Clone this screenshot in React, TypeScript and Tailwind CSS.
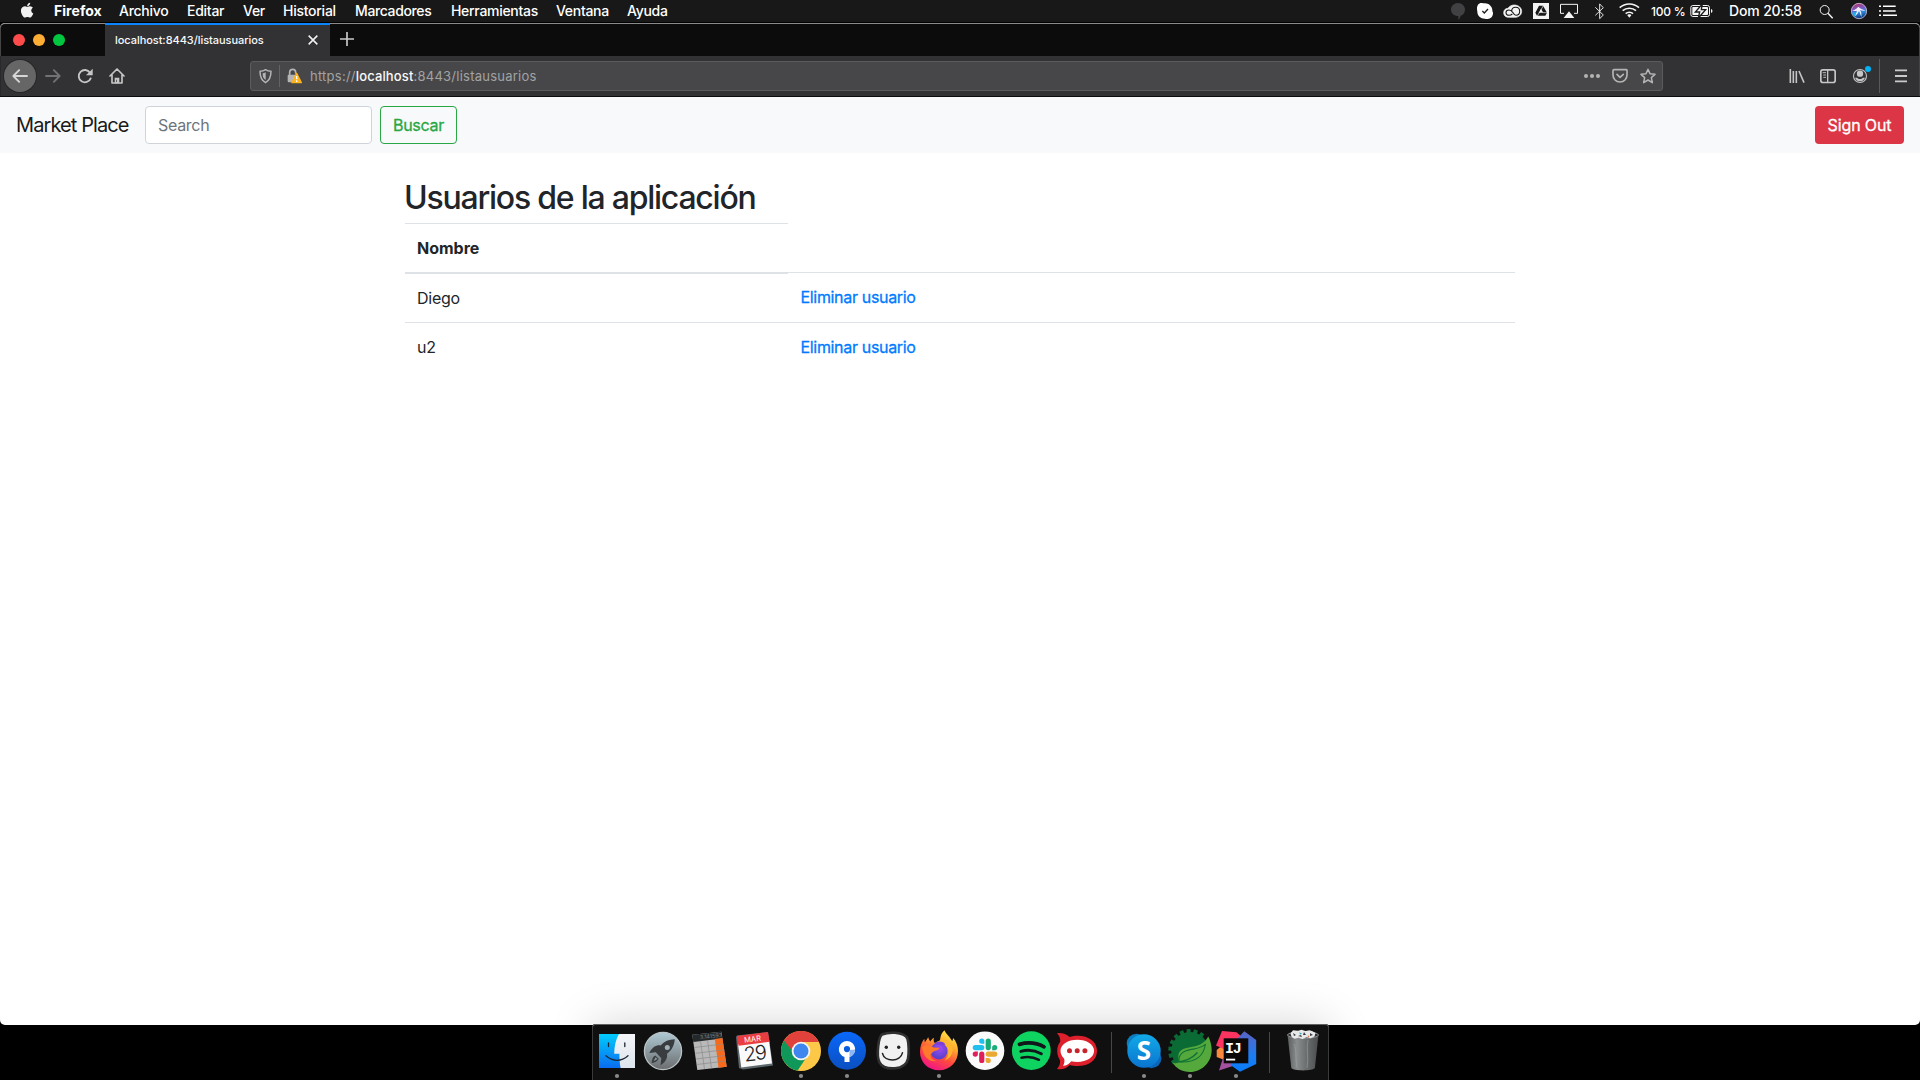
import type { ReactNode } from "react";

type GlyphProps = { w: number; h: number; children: ReactNode; className?: string };

/* Small bar icons are drawn on a grid three times finer than their box. */
function Glyph({ w, h, children, className = "" }: GlyphProps) {
  return (
    <svg width={w} height={h} viewBox={`0 0 ${w * 3} ${h * 3}`} className={`block shrink-0 ${className}`} fill="none">
      {children}
    </svg>
  );
}

const menus = [
  { label: "Firefox", cls: "w-[65px] font-bold tracking-[0.05px]" },
  { label: "Archivo", cls: "w-[68px]" },
  { label: "Editar", cls: "w-[56px]" },
  { label: "Ver", cls: "w-[40px]" },
  { label: "Historial", cls: "w-[72px]" },
  { label: "Marcadores", cls: "w-[96px] tracking-[-0.37px]" },
  { label: "Herramientas", cls: "w-[105px] tracking-[-0.3px]" },
  { label: "Ventana", cls: "w-[71px] tracking-[-0.3px]" },
  { label: "Ayuda", cls: "w-[50px] tracking-[-0.3px]" },
];

function MenuBar() {
  return (
    <div className="flex h-[22px] items-center bg-[#181818] text-sm font-medium leading-[22px] tracking-[-0.26px] text-white">
      <Glyph w={14} h={22} className="ml-[20px] mr-[20px]">
        <g transform="translate(-8 1) scale(2.450)">
          <path
            fill="#f2f2f2"
            d="M17.05 20.28c-.98.95-2.05.8-3.08.35-1.09-.46-2.09-.48-3.24 0-1.44.62-2.2.44-3.06-.35C2.79 15.25 3.51 7.59 9.05 7.31c1.35.07 2.29.74 3.08.8 1.18-.24 2.31-.93 3.57-.84 1.51.12 2.65.72 3.4 1.8-3.12 1.87-2.38 5.98.48 7.13-.57 1.5-1.31 2.99-2.54 4.09zM12.03 7.25c-.15-2.23 1.66-4.07 3.74-4.25.29 2.58-2.34 4.5-3.74 4.25z"
          />
        </g>
      </Glyph>
      {menus.map((m) => (
        <span key={m.label} className={m.cls}>
          {m.label}
        </span>
      ))}
      <div className="ml-auto flex h-[22px] items-center">
        <Glyph w={14} h={22}>
          <path fill="#414144" d="M21 9c12 0 21 9 21 20 0 10-6 16-13 18-1 5-3 9-7 12v-11C9 48 0 40 0 29S9 9 21 9z" />
        </Glyph>
        <Glyph w={16} h={22} className="ml-3">
          <path fill="#fff" d="M13 9c4 0 6 1 9 1 12-1 23 8 24 20 0 4 1 5 2 8 1 12-8 20-17 19-3 0-5-1-8-1C11 56 1 47 1 35c0-3-1-5-1-9C0 16 5 9 13 9z" />
          <path d="M16 33l6 6 11-12" stroke="#222" strokeWidth="4" />
        </Glyph>
        <Glyph w={20} h={22} className="ml-[10px]">
          <path d="M17 52C8 52 2 46 2 38s6-13 13-13c4-6 10-10 18-10 13 0 23 8 23 19s-9 18-20 18z" fill="#f4f4f4" stroke="#f4f4f4" strokeWidth="2" />
          <path d="M28 42c-3 3-6 4-10 4-6 0-9-4-9-8s4-8 9-8c6 0 9 4 12 8 3 5 5 8 9 8 6 0 11-5 11-12s-5-12-12-12-12 5-12 12" stroke="#181818" strokeWidth="3.2" />
        </Glyph>
        <Glyph w={16} h={22} className="ml-[10px]">
          <rect y="9" width="48" height="48" fill="#f4f4f4" />
          <path d="M18 17h12l12 21-5 9H12l-5-9zM24 26l-7 12h14z" fill="#181818" fillRule="evenodd" />
          <path d="M31 17L22 33M13 48l7-12M43 38H29" stroke="#f4f4f4" strokeWidth="2" />
        </Glyph>
        <Glyph w={18} h={22} className="ml-[11px]">
          <path d="M12 40H1.5V13h51v27H42" stroke="#f4f4f4" strokeWidth="3" />
          <path d="M27 34l16 20H11z" fill="#f4f4f4" />
        </Glyph>
        <Glyph w={11} h={22} className="ml-4">
          <path d="M4 22l24 23-11 11V12l11 11L4 46" stroke="#f4f4f4" strokeWidth="2.800" />
        </Glyph>
        <Glyph w={21} h={22} className="ml-[14px]">
          <g stroke="#f4f4f4" strokeWidth="4.600">
            <path d="M2 23c16-15 42-15 58 0" />
            <path d="M11 32c11-10 29-10 40 0" />
            <path d="M20 41c6-6 16-6 22 0" />
          </g>
          <path d="M31 43c4 0 6 2 6 3l-6 7-6-7c0-1 2-3 6-3z" fill="#f4f4f4" />
        </Glyph>
        <span className="ml-[11px] w-[39px] text-xs leading-[21px] tracking-[-0.25px]">100 %</span>
        <Glyph w={24} h={22}>
          <rect x="2.500" y="16.500" width="56" height="33" rx="6" stroke="#f4f4f4" strokeWidth="3" />
          <path d="M63 27c6 2 6 10 0 12z" fill="#f4f4f4" />
          <rect x="7" y="21" width="47" height="24" rx="2" fill="#f4f4f4" />
          <path d="M37 12L16 36h13l-4 18 22-25H34z" fill="#f4f4f4" stroke="#181818" strokeWidth="4" />
        </Glyph>
        <span className="ml-[15px] w-[90px] tracking-[-0.15px]">Dom 20:58</span>
        <Glyph w={15} h={22}>
          <circle cx="17" cy="30" r="13.500" stroke="#f4f4f4" strokeWidth="3" />
          <path d="M27 40l14 15" stroke="#f4f4f4" strokeWidth="4.200" />
        </Glyph>
        <Glyph w={16} h={22} className="ml-[17px]">
          <defs>
            <linearGradient id="siri" x1="0" y1="0" x2="0.25" y2="1">
              <stop offset="0.100" stopColor="#b0306c" />
              <stop offset="0.450" stopColor="#7a5cc8" />
              <stop offset="0.700" stopColor="#2a8be0" />
              <stop offset="1" stopColor="#123b84" />
            </linearGradient>
          </defs>
          <circle cx="24" cy="33" r="23" fill="url(#siri)" stroke="#c9c4d6" strokeWidth="2.500" />
          <path d="M3 32c9-2 13-6 19-12 5 6 12 8 22 12-8 1-13 0-17-2 4 6 5 14 4 21-3-7-4-13-7-18-3 6-7 12-13 16 2-6 5-12 7-17-5 1-10 1-15 0z" fill="#fff" opacity="0.900" />
          <path d="M5 36c4 2 8 1 12 0-2 5-4 9-6 12-3-3-6-7-6-12z" fill="#18b6e8" />
        </Glyph>
        <Glyph w={18} h={22} className="ml-3 mr-[23px]">
          <path d="M12 19h38M12 33h38M12 46h42" stroke="#fff" strokeWidth="4.600" />
          <path d="M0 19h6M0 33h6M0 46h6" stroke="#fff" strokeWidth="4.600" />
        </Glyph>
      </div>
    </div>
  );
}

function TabStrip() {
  return (
    <div className="flex h-[33px] rounded-t-[5px] border border-b-0 border-[#8b8b8b] border-x-[#454545] bg-[#0c0c0c]">
      <div className="flex w-[104px] items-center gap-2 pl-3">
        <span className="size-3 rounded-full bg-[#ff4b4c]" />
        <span className="size-3 rounded-full bg-[#ffae35]" />
        <span className="size-3 rounded-full bg-[#00c73f]" />
      </div>
      <div className="-mt-px flex h-[33px] w-[225px] items-center justify-between border-t-2 border-[#0a84ff] bg-[#323234] pl-[10px] pr-3 text-[11px] font-medium tracking-[-0.05px] text-[#f9f9fa]">
        <span className="pb-px">localhost:8443/listausuarios</span>
        <Glyph w={10} h={10} className="-mt-px">
          <path d="M2 2l26 26M28 2L2 28" stroke="#f0f0f0" strokeWidth="4.800" />
        </Glyph>
      </div>
      <Glyph w={14} h={14} className="ml-[10px] mt-[8px]">
        <path d="M21 0v42M0 21h42" stroke="#c9c9ca" strokeWidth="5" />
      </Glyph>
    </div>
  );
}

function ToolBar() {
  return (
    <div className="flex h-10 items-center border-x border-[#454545] border-l-[#29292b] bg-[#323234]">
      <div className="ml-[3px] flex size-8 items-center justify-center rounded-full bg-[#666667] ring-1 ring-[#272729]">
        <Glyph w={16} h={16}>
          <path d="M47 24H3M23 5L4 24l19 19" stroke="#d6d6d7" strokeWidth="5.500" strokeLinejoin="round" />
        </Glyph>
      </div>
      <Glyph w={16} h={16} className="ml-[9px]">
        <path d="M1 24h44M25 5l19 19-19 19" stroke="#727274" strokeWidth="5.500" strokeLinejoin="round" />
      </Glyph>
      <Glyph w={16} h={16} className="ml-4">
        <path d="M39 14A18.5 18.5 0 1 0 41 31" stroke="#c6c6c7" strokeWidth="5.500" strokeLinecap="round" />
        <path d="M47 2v20H27z" fill="#c6c6c7" />
      </Glyph>
      <Glyph w={16} h={16} className="ml-4">
        <path d="M3 24L24 3l21 21M9 21v24h30V21" stroke="#c6c6c7" strokeWidth="5" strokeLinejoin="round" strokeLinecap="round" />
        <path d="M17 29h14v17H17z" fill="#c6c6c7" />
        <path d="M22 35h2v7h-2z" fill="#323234" />
      </Glyph>
      <div className="ml-[125px] flex h-[30px] w-[1413px] items-center rounded-[3px] border border-[#5b5b5d] bg-[#474749] pl-2">
        <Glyph w={13} h={16}>
          <path d="M19.5 5C14 9 9 10 3 10c0 17 3 27 16.500 34C33 37 36 27 36 10c-6 0-11-1-16.500-5z" stroke="#b4b4b5" strokeWidth="4.500" strokeLinejoin="round" />
          <path d="M20 13c-3 2-6 3-9 3 0 11 2 16 9 20z" fill="#b4b4b5" />
        </Glyph>
        <div className="ml-[7px] h-[22px] w-px bg-[#636365]" />
        <Glyph w={16} h={16} className="ml-[7px]">
          <path d="M8 24V13c0-12 18-12 18 0v4" stroke="#b4b4b5" strokeWidth="5" />
          <rect x="2" y="20" width="26" height="23" rx="3" fill="#b4b4b5" />
          <path d="M29 16L43 44H15z" fill="#ffb31a" stroke="#ffb31a" strokeWidth="4" strokeLinejoin="round" />
          <path d="M29 24v10M29 37v5" stroke="#fff" strokeWidth="4" />
        </Glyph>
        <span className="ml-[7px] pt-px text-[13px] tracking-[0.24px] text-[#a3a3a4]">
          https://<span className="font-medium tracking-[0.14px] text-[#f9f9fa]">localhost</span>:8443/listausuarios
        </span>
        <Glyph w={16} h={16} className="ml-auto">
          <circle cx="6" cy="24" r="6" fill="#b4b4b5" />
          <circle cx="24" cy="24" r="6" fill="#b4b4b5" />
          <circle cx="42" cy="24" r="6" fill="#b4b4b5" />
        </Glyph>
        <Glyph w={16} h={16} className="ml-3">
          <path d="M6 5h37c1 0 2 1 2 2v14c0 12-9 21-21 21S3 33 3 21V8c0-2 1-3 3-3z" stroke="#b4b4b5" strokeWidth="5" />
          <path d="M15 19l9 9 10-9" stroke="#b4b4b5" strokeWidth="5" strokeLinecap="round" strokeLinejoin="round" />
        </Glyph>
        <Glyph w={16} h={16} className="ml-3 mr-[6px]">
          <path d="M24 4l6 13 15 2-11 10 3 15-13-8-13 8 3-15L3 19l15-2z" stroke="#b4b4b5" strokeWidth="4.500" strokeLinejoin="round" />
        </Glyph>
      </div>
      <div className="ml-auto flex items-center">
        <Glyph w={16} h={16}>
          <path d="M4 3v42M13 9v36M22 9v36" stroke="#c6c6c7" strokeWidth="4.800" />
          <path d="M30 9l15 35" stroke="#c6c6c7" strokeWidth="4.800" />
        </Glyph>
        <Glyph w={16} h={16} className="ml-[15px]">
          <rect x="2.500" y="5.500" width="43" height="38" rx="6" stroke="#c6c6c7" strokeWidth="5" />
          <path d="M23 5v39" stroke="#c6c6c7" strokeWidth="4" />
          <path d="M8 14h10M10 21h8M10 28h8" stroke="#c6c6c7" strokeWidth="2.800" />
        </Glyph>
        <Glyph w={19} h={22} className="ml-4">
          <circle cx="24" cy="33" r="19.500" stroke="#c6c6c7" strokeWidth="3.200" />
          <circle cx="24" cy="26" r="9.500" fill="#c6c6c7" />
          <path d="M9 38h6c4 5 14 5 18 0h6c-3 7-8 11-15 11S12 45 9 38z" fill="#c6c6c7" />
          <circle cx="48" cy="12" r="9" fill="#00b3f4" />
        </Glyph>
        <div className="ml-2 h-[34px] w-px bg-[#59595b]" />
        <Glyph w={12} h={16} className="ml-[15px] mr-3">
          <path d="M0 7h36M0 24h36M0 40h36" stroke="#c9c9ca" strokeWidth="5.500" />
        </Glyph>
      </div>
    </div>
  );
}

function SiteNav() {
  return (
    <nav className="flex h-14 items-center bg-[#f8f9fa] px-4 pb-px">
      <span className="w-[129px] pt-px text-xl leading-[30px] tracking-[-0.9px] text-[#1a1a1a]">Market Place</span>
      <div className="flex h-[38px] w-[227px] items-center rounded-[4px] border border-[#ced4da] bg-white px-3 text-base tracking-[-0.3px] text-[#6c757d]">
        Search
      </div>
      <button className="ml-2 h-[38px] w-[77px] rounded-[4px] border border-[#28a745] text-base tracking-[-0.25px] text-[#28a745] [-webkit-text-stroke:0.3px]">
        Buscar
      </button>
      <button className="ml-auto h-[38px] w-[89px] rounded-[4px] bg-[#dc3545] text-base tracking-[-0.12px] text-white [-webkit-text-stroke:0.3px]">
        Sign Out
      </button>
    </nav>
  );
}

function UserTable() {
  return (
    <main className="mx-auto w-[1110px] pt-[26px] text-[#212529]">
      <h1 className="-ml-px h-[44px] text-[32px] font-medium leading-[38px] tracking-[-1.230px]">Usuarios de la aplicación</h1>
      <div className="grid grid-cols-[383px_1fr] text-base leading-6">
        <div className="h-[51px] border-b-2 border-t border-[#dee2e6] px-3 pt-3 font-bold tracking-[0px]">Nombre</div>
        <div className="mb-px border-b border-[#dee2e6]" />
        <div className="h-[48px] px-3 pt-3 tracking-[-0.25px]">Diego</div>
        <div className="pl-[12.5px] pt-[11px] tracking-[-0.33px] text-[#007bff] [-webkit-text-stroke:0.3px]">Eliminar usuario</div>
        <div className="h-[49px] border-t border-[#dee2e6] px-3 pt-3 tracking-[-0.3px]">u2</div>
        <div className="border-t border-[#dee2e6] pl-[12.5px] pt-3 tracking-[-0.33px] text-[#007bff] [-webkit-text-stroke:0.3px]">Eliminar usuario</div>
      </div>
    </main>
  );
}

function DockItem({ running, children }: { running?: boolean; children: ReactNode }) {
  return (
    <svg width="46" height="56" viewBox="0 0 46 56" className="block shrink-0" fill="none">
      {children}
      {running && <circle cx="23" cy="52" r="2.1" fill="#8a8a8a" />}
    </svg>
  );
}

function Finder() {
  return (
    <DockItem running>
      <defs>
        <linearGradient id="fl" x1="0" y1="0" x2="0" y2="1">
          <stop stopColor="#00ccfc" />
          <stop offset="1" stopColor="#0a6cf0" />
        </linearGradient>
        <linearGradient id="fr" x1="0" y1="0" x2="0" y2="1">
          <stop stopColor="#f4f5f8" />
          <stop offset="1" stopColor="#dde5ee" />
        </linearGradient>
      </defs>
      <path d="M5 10h36v34H5z" fill="url(#fl)" />
      <path d="M25 10h16v34H26.600c-.8-4-1.200-9-1.200-14.300H20.200C20.300 22 22 15 25 10z" fill="url(#fr)" />
      <path d="M14.500 19v3.600M30.800 19v3.600" stroke="#1d2733" strokeWidth="1.300" strokeLinecap="round" />
      <path d="M12 31.800c6.500 6 15.500 6 22 0" stroke="#1d2733" strokeWidth="1.300" strokeLinecap="round" />
    </DockItem>
  );
}

function Launchpad() {
  return (
    <DockItem>
      <defs>
        <linearGradient id="lp" x1="0" y1="0" x2="0" y2="1">
          <stop stopColor="#aec9d3" />
          <stop offset="1" stopColor="#6b6d6e" />
        </linearGradient>
      </defs>
      <circle cx="23" cy="27" r="18.600" fill="url(#lp)" stroke="#b9c3c7" strokeWidth="1.300" />
      <path d="M34.800 15.200c-6 .2-10.500 2-14 6.300-4-.8-8.500 1.500-11.500 7.500l6.500-.8 5.500 6-.8 7c5-2.800 7.300-7.300 6.500-11.500 5-3.600 7.300-8.600 7.800-14.500z" fill="#393d40" />
      <circle cx="27.300" cy="23.500" r="2.500" fill="#9fb2ba" />
      <path d="M15.200 31.500c-2.600 1.500-3.200 4-3.500 7.500 3.300-.5 5.700-1.500 7-4.300z" fill="#393d40" />
      <path d="M15.500 33.200l-2 4 4-2.300" fill="#8a989d" />
    </DockItem>
  );
}

function Calculator() {
  return (
    <DockItem>
      <path d="M6.300 10.700l29-3 5.400 35L11.300 46z" fill="#b9b9ba" />
      <path d="M6.300 10.700l29-3 1 6.700-29 3.600z" fill="#23282b" />
      <path d="M28.800 15l7.600-1 4.300 28.700-8.200 1z" fill="#f76a1b" />
      <path d="M8.300 23.500l29.200-3.500M9.300 29.300l29.200-3.500M10 35l29.200-3.500M10.800 40.500l29.200-3.500M14.500 17l4 28M21.500 16l4 28.500" stroke="#8b8b8c" strokeWidth="0.700" />
      <text x="14" y="15.200" transform="rotate(-6 14 15)" fontSize="5.500" fill="#7b8488" fontFamily="Inter">3.141593</text>
    </DockItem>
  );
}

function Calendar() {
  return (
    <DockItem>
      <path d="M4 13l1-1.500L36 8l5 33.500-30 4L7 44z" fill="#5d686d" />
      <path d="M6 20l31-4 3 23.500-30.700 4z" fill="#fafafa" />
      <path d="M5 12l31-4 1.500 9.700-31 4.100z" fill="#ea3d41" />
      <g transform="rotate(-7 23 27)" textAnchor="middle" fontFamily="Inter">
        <text x="22" y="17.500" fontSize="7.500" fill="#fff">MAR</text>
        <text x="22.500" y="36.300" fontSize="20" fontWeight="300" letterSpacing="-1.200" fill="#222">29</text>
      </g>
    </DockItem>
  );
}

function Chrome() {
  return (
    <DockItem running>
      <circle cx="23" cy="27" r="20" fill="#fdc748" />
      <path d="M5.900 16.600A20 20 0 0 0 19.500 46.700L30 31 16 20z" fill="#10985a" />
      <path d="M5.900 16.600A20 20 0 0 1 40.900 18H23l-8.500 9z" fill="#e0413a" />
      <circle cx="23" cy="27" r="9.300" fill="#f4f4f4" />
      <circle cx="23" cy="27" r="7.500" fill="#3f86ee" />
    </DockItem>
  );
}

function SourceTree() {
  return (
    <DockItem running>
      <defs>
        <linearGradient id="st" x1="0" y1="0" x2="0" y2="1">
          <stop stopColor="#0a68fa" />
          <stop offset="1" stopColor="#0a4fc0" />
        </linearGradient>
      </defs>
      <circle cx="23" cy="26.700" r="19" fill="url(#st)" />
      <path d="M23 17a8.200 8.200 0 0 0-2.500 16v5h5v-5A8.200 8.200 0 0 0 23 17zm0 5a3.100 3.100 0 1 1 0 6.200 3.100 3.100 0 0 1 0-6.200z" fill="#fff" fillRule="evenodd" />
      <path d="M26 26l5.100-.5a8.200 8.200 0 0 1-5.600 7.500v-5z" fill="#8db4f3" />
    </DockItem>
  );
}

function Balsamiq() {
  return (
    <DockItem>
      <path d="M12 10.500c5-2 9-2 13-1.700 6 .5 11 2 12.500 6 1.500 5 1.500 15 .5 20-1.300 6-6 9-13 9.500-7 .5-13-1-15.500-6-2-4-2-10-1.300-16 .5-5 1.300-9.800 3.800-11.800z" fill="#f1f1f1" stroke="#303030" strokeWidth="2.600" />
      <circle cx="16.300" cy="23.300" r="1.700" fill="#222" />
      <circle cx="28.700" cy="23.300" r="1.700" fill="#222" />
      <path d="M12.500 29.500c2 8.500 18 9 20-.8" stroke="#222" strokeWidth="1.500" strokeLinecap="round" />
    </DockItem>
  );
}

function FirefoxIcon() {
  return (
    <DockItem running>
      <defs>
        <linearGradient id="ff" x1="0.8" y1="0" x2="0.3" y2="1">
          <stop stopColor="#fff04a" />
          <stop offset="0.35" stopColor="#ffa52e" />
          <stop offset="0.65" stopColor="#ff4a3d" />
          <stop offset="1" stopColor="#f0128a" />
        </linearGradient>
        <radialGradient id="fg" cx="0.55" cy="0.35" r="0.7">
          <stop stopColor="#a04bf2" />
          <stop offset="1" stopColor="#4a3fc4" />
        </radialGradient>
      </defs>
      <path d="M28.500 6.300c1.500 4 5.500 6.500 7.800 11l.9-3.300c3 3.500 4.800 8 4.800 13 0 11-8 19.300-19 19.300S4 38 4 28c0-5.500 1.600-9.700 4.300-13.200l.5 3.800 3.400-5.300c.5 1.600 1 3 2 4.200 1.300-1.600 1.900-2.600 3.600-3.700-.3 2.200-.2 4 .9 5.300 1.800-.8 3.500-.9 4.800-.7 1-3 .5-8.500 5-12.100z" fill="url(#ff)" />
      <circle cx="23" cy="27" r="8.500" fill="url(#fg)" />
      <path d="M6 23c4-2.700 8-1.800 11.500.5l5.500.3c.3 1.700-2 2.900-4.500 3.200-2 .8-2.500 2.300-3.800 3.200-.6 3.500 2.300 6.300 6.300 6.800-8 1.500-14-4-15-14z" fill="#ff7a2a" />
      <path d="M19 19.500c5-3 10-1 12.500 4 2 5 .5 10-3 13 7-2 10-10 7-16-3-5.500-11-6.500-16.500-1z" fill="#ffb52e" />
      <path d="M18.500 19.500c3.500-3 9-2.500 11 1-1-.2-2 0-2.500.7-2.500-.2-6-.2-8.500-1.700z" fill="#7c3fd8" />
    </DockItem>
  );
}

function Slack() {
  return (
    <DockItem>
      <circle cx="23" cy="26.700" r="19.300" fill="#fafafa" />
      <g transform="translate(10.700 14.500) scale(1.025)">
        <path fill="#e01e5a" d="M5.042 15.165a2.528 2.528 0 0 1-2.520 2.523A2.528 2.528 0 0 1 0 15.165a2.527 2.527 0 0 1 2.522-2.520h2.520v2.520zM6.313 15.165a2.527 2.527 0 0 1 2.521-2.520 2.527 2.527 0 0 1 2.521 2.520v6.313A2.528 2.528 0 0 1 8.834 24a2.528 2.528 0 0 1-2.521-2.522v-6.313z" />
        <path fill="#1fbfee" d="M8.834 5.042a2.528 2.528 0 0 1-2.521-2.520A2.528 2.528 0 0 1 8.834 0a2.528 2.528 0 0 1 2.521 2.522v2.520H8.834zM8.834 6.313a2.528 2.528 0 0 1 2.521 2.521 2.528 2.528 0 0 1-2.521 2.521H2.522A2.528 2.528 0 0 1 0 8.834a2.528 2.528 0 0 1 2.522-2.521h6.312z" />
        <path fill="#18ad78" d="M18.956 8.834a2.528 2.528 0 0 1 2.522-2.521A2.528 2.528 0 0 1 24 8.834a2.528 2.528 0 0 1-2.522 2.521h-2.522V8.834zM17.688 8.834a2.528 2.528 0 0 1-2.523 2.521 2.527 2.527 0 0 1-2.520-2.521V2.522A2.527 2.527 0 0 1 15.165 0a2.528 2.528 0 0 1 2.523 2.522v6.312z" />
        <path fill="#e9a932" d="M15.165 18.956a2.528 2.528 0 0 1 2.523 2.522A2.528 2.528 0 0 1 15.165 24a2.527 2.527 0 0 1-2.520-2.522v-2.522h2.520zM15.165 17.688a2.527 2.527 0 0 1-2.520-2.523 2.526 2.526 0 0 1 2.520-2.520h6.313A2.527 2.527 0 0 1 24 15.165a2.528 2.528 0 0 1-2.522 2.523h-6.313z" />
      </g>
    </DockItem>
  );
}

function Spotify() {
  return (
    <DockItem>
      <circle cx="23.300" cy="26.700" r="19.400" fill="#0ed361" />
      <g stroke="#10161a" strokeLinecap="round">
        <path d="M11.500 20.300c8-2.200 17-1.600 24.500 2.500" strokeWidth="3.800" />
        <path d="M12.800 27.400c7-2 14-1.200 20.500 2.300" strokeWidth="3" />
        <path d="M13.500 33.800c6-1.500 12-.8 17.500 2" strokeWidth="2.500" />
      </g>
    </DockItem>
  );
}

function RocketChat() {
  return (
    <DockItem>
      <path d="M3 9.200c5-.5 9.500.8 12.500 3.800 3-.9 5.600-1.200 8-1.200 11.500 0 19.500 6 19.500 15.200S35 42 23.500 42c-2.800 0-5.200-.3-7.700-1C12.500 44.500 8 45.800 3 44.900c2.500-2.700 3.400-5.400 3-8.400C4.500 33.500 3.200 31 3.200 27s1-6.500 3-9.300C6.500 14.500 5.500 12 3 9.200z" fill="#de1f2c" />
      <path d="M23.300 15.700c9.500 0 16.800 4.800 16.800 11.100S33 37.900 23.300 37.900c-2.300 0-4.300-.2-6-.7-2 2.600-5 4.600-8.300 4.500 1.300-2 1.800-4.300 1.200-7-2.300-2.200-3.700-4.800-3.700-7.900 0-6.300 7.300-11.100 16.800-11.100z" fill="#fff" />
      <circle cx="15.500" cy="26.700" r="2.500" fill="#c9232d" />
      <circle cx="23.200" cy="26.700" r="2.500" fill="#c9232d" />
      <circle cx="30.900" cy="26.700" r="2.500" fill="#c9232d" />
    </DockItem>
  );
}

function Skype() {
  return (
    <DockItem running>
      <defs>
        <linearGradient id="sk" x1="0" y1="0" x2="0" y2="1">
          <stop stopColor="#12aae8" />
          <stop offset="1" stopColor="#0a74cf" />
        </linearGradient>
      </defs>
      <circle cx="15.500" cy="19.500" r="9.800" fill="#0c7dbf" />
      <circle cx="30.500" cy="34.300" r="9.900" fill="#0a66bb" />
      <circle cx="23" cy="27" r="16.700" fill="url(#sk)" />
      <text x="23" y="36.300" textAnchor="middle" fontFamily="Open Sans" fontWeight="700" fontSize="26" fill="#fff">S</text>
    </DockItem>
  );
}

const teeth = [-124, -104, -84, -64, -44, -24, -4, 16, 36];

function Spring() {
  return (
    <DockItem running>
      <circle cx="23" cy="26.700" r="18.700" fill="#0b6b35" />
      {teeth.map((a) => (
        <rect key={a} x="21" y="5" width="4" height="6" fill="#0b6b35" transform={`rotate(${a} 23 26.7)`} />
      ))}
      <path d="M41.300 12.500c2 4 3.400 8.500 3.400 13.500 0 12.300-9.700 22-21.700 22-8 0-14-3.700-17.500-9.500 3.500 1.300 6 .5 6.500-1.500C9 25 17 24.500 27 22.500c6-1.200 11-4 14.300-10z" fill="#55a93c" />
      <path d="M38.500 20c-6 8-25 2-26.500 15-.2 2 .3 3 2 3 15 .5 22.500-5.500 24.500-18z" fill="#55a93c" stroke="#0f7236" strokeWidth="1.100" />
      <path d="M8 38.200c9 0 17-3.600 22.500-9.700" stroke="#0f7236" strokeWidth="1.500" />
    </DockItem>
  );
}

function IntelliJ() {
  return (
    <DockItem running>
      <defs>
        <linearGradient id="ij" x1="0" y1="0" x2="0" y2="1">
          <stop stopColor="#5b62c4" />
          <stop offset="0.6" stopColor="#1d7df0" />
          <stop offset="1" stopColor="#087cfa" />
        </linearGradient>
      </defs>
      <path d="M8 22.500L14 21v16L3.700 33v-7z" fill="#f98a3c" />
      <path d="M10 34l16 6-20 6.500z" fill="#a4529f" />
      <path d="M9 7l14.500 1.300L30 14 13 26 3 21.500z" fill="#fd3360" />
      <path d="M31.300 7.300L43.200 16v24L27 47.700 17.500 41 24 15z" fill="url(#ij)" />
      <path d="M10.700 14.300h24.600v25H10.700z" fill="#0c0808" />
      <path d="M13 34.700h9.200v1.800H13z" fill="#fff" />
      <text x="12" y="28.500" fontFamily="Liberation Mono" fontWeight="700" fontSize="15" letterSpacing="-1.200" fill="#fff">IJ</text>
    </DockItem>
  );
}

function Trash() {
  return (
    <DockItem>
      <defs>
        <linearGradient id="tr" x1="0" y1="0" x2="1" y2="0">
          <stop stopColor="#5a5d5e" />
          <stop offset="0.3" stopColor="#8a8d8e" />
          <stop offset="0.6" stopColor="#6c6f70" />
          <stop offset="1" stopColor="#4a4c4d" />
        </linearGradient>
      </defs>
      <path d="M7.500 10.500h31l-3.600 33.500c-2 3.200-21.500 3.200-23.600 0z" fill="url(#tr)" />
      <ellipse cx="23" cy="11" rx="15.500" ry="3.400" fill="#2d2f30" stroke="#9a9d9e" strokeWidth="0.900" />
      <path d="M10.500 9.500l2.500-3.300 5 .6 3.500-1 4 1.300 4-.8 3 1 3 1.700-1 3.500-4 1.700-4-1-4 1.800-4-1.300-4 1-3-2z" fill="#e9e9e9" />
      <path d="M13 9l3 2-2 1zM24 8l2 3h-3zM30 9l3 2-3 1zM18 12l3-1 1 2z" fill="#383c40" />
      <path d="M19 8.500l3 .8-1.500 1.500z" fill="#31a7b8" />
      <path d="M27.500 11.500l2 .5-1 1.500z" fill="#e0653d" />
      <path d="M14 20c3 6 1 14 3 23M28 16c-2 9 1 18-1 28" stroke="#a6a9aa" strokeWidth="1" opacity="0.500" />
    </DockItem>
  );
}

function Dock() {
  return (
    <div className="flex h-14 w-[737px] rounded-t-[4px] bg-[#101010] pl-[2px] shadow-[0_0_45px_rgba(0,0,0,0.17),inset_0_1px_0_#606060,inset_1px_0_0_#3a3a3a,inset_-1px_0_0_#3a3a3a]">
      <Finder />
      <Launchpad />
      <Calculator />
      <Calendar />
      <Chrome />
      <SourceTree />
      <Balsamiq />
      <FirefoxIcon />
      <Slack />
      <Spotify />
      <RocketChat />
      <div className="ml-[11px] mr-[9px] mt-2 h-[41px] w-px bg-[#474747]" />
      <Skype />
      <Spring />
      <IntelliJ />
      <div className="ml-[10px] mr-[10px] mt-2 h-[41px] w-px bg-[#474747]" />
      <Trash />
    </div>
  );
}

export default function App() {
  return (
    <div className="flex h-[1080px] w-[1920px] flex-col overflow-hidden bg-black font-[Inter,sans-serif]">
      <MenuBar />
      <div className="mt-px h-[1002px] shrink-0 overflow-hidden rounded-[5px] bg-white">
        <TabStrip />
        <ToolBar />
        <div className="h-px bg-[#0c0c0d]" />
        <SiteNav />
        <UserTable />
      </div>
      <div className="relative z-10 -mt-px flex pl-[592px]">
        <Dock />
      </div>
    </div>
  );
}
